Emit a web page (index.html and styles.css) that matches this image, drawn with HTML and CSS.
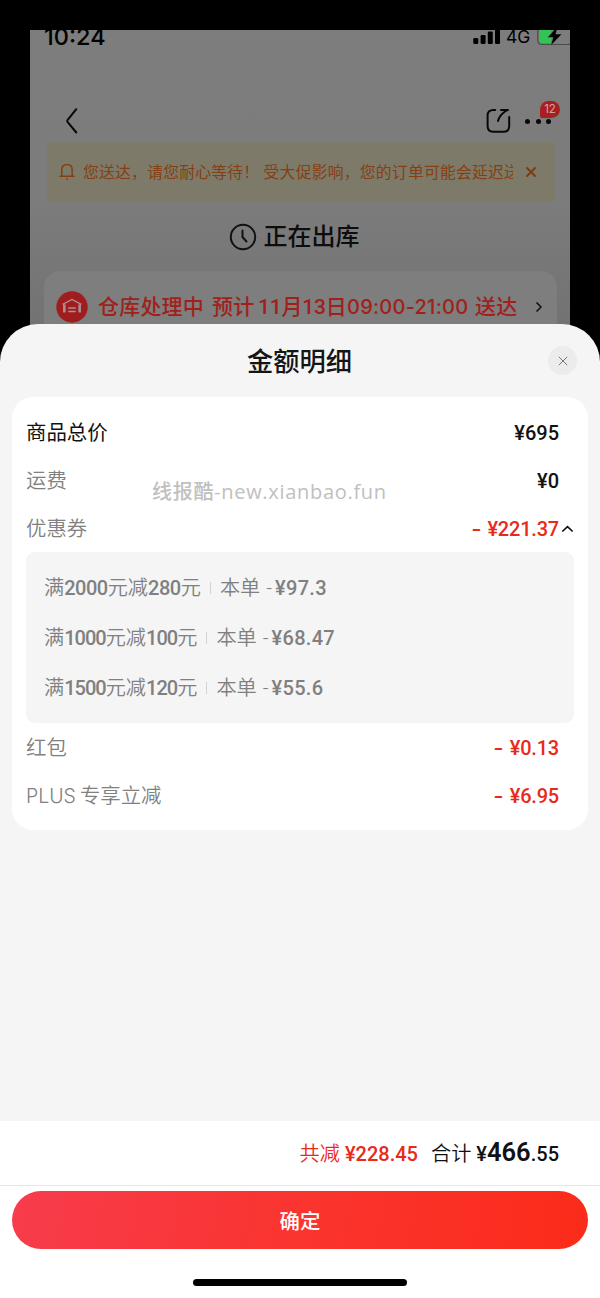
FILE: index.html
```html
<!DOCTYPE html>
<html lang="zh-CN">
<head>
<meta charset="utf-8">
<title>金额明细</title>
<link rel="stylesheet" href="styles.css">
</head>
<body>
<div class="screen">
  <div class="backdrop">
    <div class="page">
      <div class="status">
        <span class="time">10:24</span>
        <svg class="signal" width="28" height="18" viewBox="0 0 28 18"><rect x="0.3" y="11" width="5" height="6" rx="1.3"/><rect x="7.6" y="8" width="5" height="9" rx="1.3"/><rect x="14.8" y="4.5" width="5" height="12.5" rx="1.3"/><rect x="22" y="0" width="5" height="17" rx="1.3"/></svg>
        <span class="net">4G</span>
        <svg class="battery" width="33" height="20" viewBox="0 0 33 20"><rect x="0.8" y="0" width="34" height="16.5" rx="4" fill="none" stroke="#4b4b4b" stroke-width="1.2"/><path d="M2.2 0H14V15H5Q2.2 15 2.2 12.2Z" fill="#32c455"/><path d="M21.5-3 10.5 9.5H16L13.5 18 25 6H18.8Z" fill="#000" stroke="#7c7c7c" stroke-width=".6"/></svg>
      </div>
      <div class="nav">
        <svg class="back" width="14" height="28" viewBox="0 0 14 28"><path d="M12.3 2.2 3.5 13.2Q2.9 14 3.5 14.8L12.3 25.5" fill="none" stroke="#080808" stroke-width="2" stroke-linecap="round"/></svg>
        <svg class="share" width="26" height="26" viewBox="0 0 26 26"><path d="M9.2 2H7.2Q1.6 2 1.6 7.6V18Q1.6 23.8 7.2 23.8H17.5Q23.2 23.8 23.2 18V9M12 13Q13.5 6.5 21.5 2M15 2H22" fill="none" stroke="#080808" stroke-width="2" stroke-linecap="round" stroke-linejoin="round"/></svg>
        <div class="more"><i></i><i></i><i></i><span class="badge">12</span></div>
      </div>
      <div class="notice">
        <svg width="16" height="18" viewBox="0 0 16 18"><path d="M1 13.2H15M2.8 13V7Q2.8 1.5 8 1.5T13.2 7V13" fill="none" stroke="#853f12" stroke-width="1.5" stroke-linecap="round"/><circle cx="8" cy="16" r="1" fill="#853f12"/></svg>
        <span class="notice-text">您送达，请您耐心等待！ 受大促影响，您的订单可能会延迟送</span>
        <svg class="dismiss" width="12" height="12" viewBox="0 0 12 12"><path d="M2 2 10 10M10 2 2 10" stroke="#7a3b0d" stroke-width="1.8" stroke-linecap="round"/></svg>
      </div>
      <div class="state">
        <svg width="28" height="28" viewBox="0 0 28 28" fill="none" stroke="#111" stroke-width="2" stroke-linecap="round"><circle cx="14" cy="14" r="12.2"/><path d="M13.5 7.5V14L17.5 18.5"/></svg>
        <span>正在出库</span>
      </div>
      <div class="delivery">
        <svg width="32" height="32" viewBox="0 0 32 32"><circle cx="16" cy="16" r="15.7" fill="#a01d1f"/><path d="M9 21.5V13.5M23 21.5V13.5M6.7 13.3 16 8.5 25.3 13.3M7.7 13.5V21.5M24.3 13.5V21.5M12.2 17H19.8M12.2 20.5H19.8" fill="none" stroke="#ad8f8f" stroke-width="1.3"/></svg>
        <span class="d1">仓库处理中</span><span class="d2">预计</span><span class="d3">11月13日</span><span class="d4">09:00-21:00</span><span class="d5">送达</span>
        <svg class="go" width="8" height="12" viewBox="0 0 8 12"><path d="M1.5 1.5 6 6 1.5 10.5" fill="none" stroke="#111" stroke-width="1.5"/></svg>
      </div>
    </div>
  </div>

  <main class="sheet">
    <header class="sheet-head">
      <h1>金额明细</h1>
      <span class="close"><svg width="12" height="12" viewBox="0 0 12 12"><path d="M1.8 1.8 10.2 10.2M10.2 1.8 1.8 10.2" stroke="#777" stroke-width="1"/></svg></span>
    </header>
    <section class="card">
      <div class="row strong"><span>商品总价</span><b>¥695</b></div>
      <div class="row"><span>运费</span><b>¥0</b></div>
      <div class="row red"><span>优惠券</span><b><em>-</em>¥221.37</b><svg class="up" width="13" height="8" viewBox="0 0 13 8"><path d="M1.3 6.5 6.5 1.7 11.7 6.5" fill="none" stroke="#111" stroke-width="1.7"/></svg></div>
      <div class="coupons">
        <div class="coupon"><span>满<b>2000</b>元减<b>280</b>元</span><i></i><span>本单</span><span class="off">-<b>¥97.3</b></span></div>
        <div class="coupon narrow"><span>满<b>1000</b>元减<b>100</b>元</span><i></i><span>本单</span><span class="off">-<b>¥68.47</b></span></div>
        <div class="coupon narrow"><span>满<b>1500</b>元减<b>120</b>元</span><i></i><span>本单</span><span class="off">-<b>¥55.6</b></span></div>
      </div>
      <div class="row red"><span>红包</span><b><em>-</em>¥0.13</b></div>
      <div class="row red"><span><span class="plus">PLUS</span>专享立减</span><b><em>-</em>¥6.95</b></div>
      <div class="watermark">线报酷-new.xianbao.fun</div>
    </section>
    <footer class="footer">
      <div class="totals">
        <span class="saved">共减<b>¥228.45</b></span>
        <span class="sum">合计<b>¥<strong>466</strong>.55</b></span>
      </div>
      <button class="confirm">确定</button>
      <div class="home"></div>
    </footer>
  </main>
</div>
</body>
</html>
```
FILE: styles.css
```css
* { box-sizing: border-box; }
body { margin: 0; background: #000; font-family: Roboto, "Noto Sans CJK SC", sans-serif; }
svg { display: block; flex: none; }
i, em { font-style: normal; }
.screen { width: 600px; height: 1298px; display: flex; flex-direction: column; overflow: hidden; }

.backdrop { height: 364px; flex: none; padding: 30px 30px 0; background: #000; }
.page { height: 334px; overflow: hidden; background: linear-gradient(#7d7d7d 0, #7c7c7c 170px, #737373 290px); }
.status { display: flex; height: 20px; padding-left: 14px; color: #000; font-family: Inter, sans-serif; }
.time { width: 429px; font-size: 23.5px; font-weight: 500; line-height: 24px; margin-top: -5px; }
.signal { margin-top: -3px; }
.net { width: 31px; margin: -3px 0 0 5px; font-size: 17.5px; font-weight: 400; line-height: 20px; }
.battery { margin: -2px 0 0 0; }
.nav { display: flex; height: 92px; padding: 57px 17px 0 34px; }
.share { margin: 1px 0 0 408px; }
.more { position: relative; display: flex; gap: 5.5px; margin: 12px 0 0 13px; }
.more i { width: 5px; height: 5px; border-radius: 50%; background: #080808; }
.badge { position: absolute; left: 15px; top: -18px; width: 20px; height: 17px; border-radius: 9px 9px 9px 2px; background: #ab1e20; color: #c8a9a9; font: 11.5px/17px Inter, sans-serif; text-align: center; }
.notice { display: flex; align-items: center; height: 60px; width: 508px; margin-left: 17px; padding: 0 17px 0 12px; border-radius: 5px; background: #7d7a69; color: #853f12; }
.notice-text { width: 430px; margin-left: 8px; padding-top: 1px; overflow: hidden; white-space: nowrap; font-size: 15.8px; letter-spacing: .24px; line-height: 24px; }
.dismiss { margin-left: 12px; }
.state { display: flex; align-items: center; justify-content: center; gap: 7px; height: 69px; padding: 1px 12px 0 0; color: #0d0d0d; font-size: 24px; font-weight: 500; line-height: 30px; }
.delivery { display: flex; align-items: center; height: 90px; margin: 0 13px 0 14px; padding: 0 14px 19px 12px; border-radius: 16px; background: #7e7e7e; color: #a0211b; font-size: 21px; font-weight: 500; line-height: 28px; white-space: nowrap; }
.delivery span { flex: none; letter-spacing: .2px; }
.d1 { width: 105px; margin-left: 10px; }
.d2 { width: 42px; margin-left: 9px; }
.delivery .d3 { width: 87px; margin-left: 4px; letter-spacing: -.2px; }
.delivery .d4 { width: 125px; margin-left: 2px; font-family: Inter, sans-serif; font-size: 20px; letter-spacing: .25px; }
.d5 { width: 43px; margin-left: 3px; }
.go { margin-left: 17px; }

.sheet { display: flex; flex-direction: column; flex: 1; margin-top: -40px; border-radius: 38px 38px 0 0; background: #f5f5f5; }
.sheet-head { position: relative; height: 73px; flex: none; display: flex; align-items: center; justify-content: center; }
.sheet-head h1 { margin: 2px 1px 0 0; font-size: 26.3px; font-weight: 500; line-height: 36px; color: #151515; }
.close { position: absolute; right: 23px; top: 22px; width: 29px; height: 29px; border-radius: 50%; background: #ececec; display: grid; place-items: center; }
.card { position: relative; height: 433px; margin: 0 12px; padding: 11px 14px 10px; border-radius: 21px; background: #fff; }
.row { display: flex; align-items: center; height: 48px; padding: 1px 15px 0 0; font-size: 20.4px; color: #808080; font-weight: 350; line-height: 28px; white-space: nowrap; }
.row > span { padding-top: 1px; }
.row > b { margin-left: auto; color: #111; font-size: 20px; font-weight: 500; }
.row.strong > span { color: #111; font-weight: 400; }
.row.red > b { color: #e82a1b; letter-spacing: -.2px; }
.row em { display: inline-block; margin-right: 8px; transform: scaleX(1.4); }
.up { margin: 0 -15px 0 2px; }
.plus { font-family: Inter, sans-serif; font-size: 19.5px; font-weight: 300; margin-right: 4px; }
.coupons { height: 171px; padding: 11px 18px 10px; border-radius: 9px; background: #f5f5f5; }
.coupon { display: flex; align-items: center; height: 50px; font-size: 20.2px; font-weight: 350; color: #808080; white-space: nowrap; line-height: 28px; }
.coupon b { font-size: 20px; font-weight: 500; letter-spacing: -.5px; }
.coupon.narrow b { letter-spacing: -1px; }
.coupon i { width: 1px; height: 12px; margin: 0 9px; background: #d2d2d2; }
.coupon .off { margin-left: 6px; }
.coupon .off b { margin-left: 3px; letter-spacing: .3px; }
.watermark { position: absolute; left: 140px; top: 82px; color: #c0c0c0; font: 500 20px/26px "Open Sans", "Noto Sans CJK SC", sans-serif; letter-spacing: .7px; white-space: nowrap; }
.footer { margin-top: auto; height: 177px; background: #fff; }
.totals { display: flex; justify-content: flex-end; align-items: baseline; height: 65px; padding: 14px 41px 0 0; border-bottom: 1px solid #e8e8e8; font-size: 20.2px; font-weight: 350; line-height: 34px; white-space: nowrap; }
.totals b { margin-left: 5px; font-weight: 500; font-size: 20px; }
.saved { color: #e82a1b; }
.sum { margin-left: 13px; color: #111; }
.sum strong { font-size: 25.5px; font-weight: 600; }
.confirm { display: block; width: 576px; height: 58px; margin: 5px 12px 0; padding: 0; border: 0; border-radius: 29px; background: linear-gradient(100deg, #f73c4c, #fa342f 50%, #fb2b19); color: #fff; font: 500 20.4px/57px "Noto Sans CJK SC", sans-serif; }
.home { width: 214px; height: 7px; margin: 30px auto 0; border-radius: 4px; background: #000; }
```
